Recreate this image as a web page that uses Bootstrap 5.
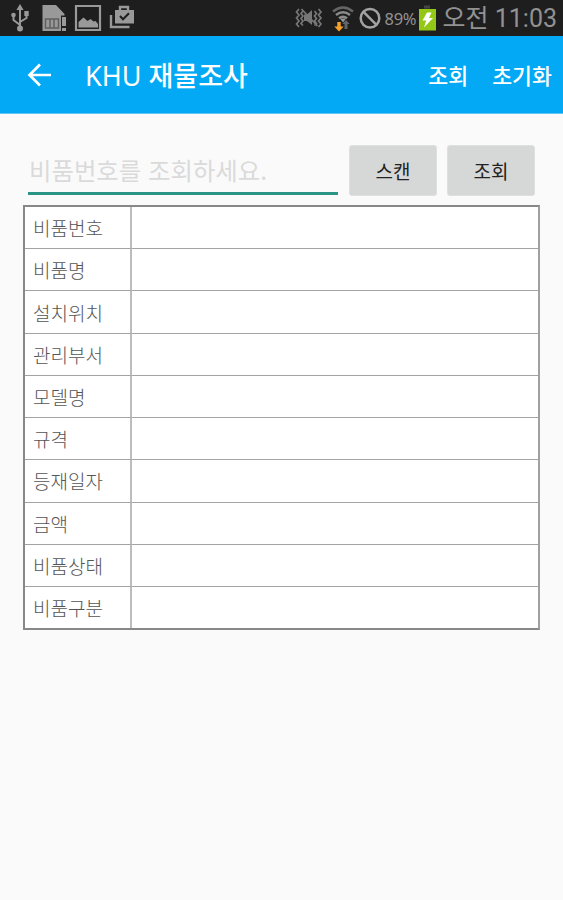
<!DOCTYPE html>
<html lang="ko">
<head>
<meta charset="utf-8">
<meta name="viewport" content="width=device-width, initial-scale=1">
<title>KHU 재물조사</title>
<link href="https://cdn.jsdelivr.net/npm/bootstrap@5.3.0/dist/css/bootstrap.min.css" rel="stylesheet">
<style>
body{background:#fafafa;font-family:Roboto,"Noto Sans CJK KR",sans-serif;min-height:900px;overflow:hidden}
.status-bar{height:36px;background:#1e1e1e;color:#929292;padding:0 6px 0 8px}
.status-bar svg{display:block;flex:none}
.battery-text{font-size:16.500px;line-height:36px;padding-top:1px;font-family:"Noto Sans",sans-serif;margin-left:3px;width:34px;letter-spacing:-.3px;white-space:nowrap}
.clock{font-size:25px;line-height:34px;padding-top:2px;margin-left:7px;white-space:nowrap}
.app-bar{height:78px;background:#03a9f4;color:#fff;padding:0 11px 0 26px;border-bottom:1px solid #62c6f5}
.app-title{font-size:27px;line-height:40px;padding-top:2px;font-weight:500;font-family:"Noto Sans","Noto Sans CJK KR",sans-serif;margin-left:33px;white-space:nowrap}
.app-title .latin{font-weight:400}
.app-action{font-size:21.7px;line-height:40px;font-weight:500;font-family:"Noto Sans CJK KR",sans-serif;color:#fff;white-space:nowrap}
.app-action:hover{color:#fff}
.search-row{padding:31px 28px 0 28px;height:91px}
.search-field{width:310px;height:50px;border:0;border-bottom:3px solid #2c9484;border-radius:0;background:transparent;padding:2px 1px 0;font-size:24.400px;font-family:"Noto Sans CJK KR",sans-serif;font-weight:400}
.search-field:focus{box-shadow:none;background:transparent;border-color:#2c9484}
.search-field::placeholder{color:#dadada;opacity:1}
.btn-tool{width:88px;height:51px;background:#d6d7d7;border:1px solid #dedfdf;border-radius:3px;font-size:19px;line-height:49px;font-family:"Noto Sans CJK KR",sans-serif;font-weight:400;color:#222;padding:0}
.tools{gap:10px}
.asset-table{width:517px;height:425px;margin:0 0 0 23px;background:#fff;border:2px solid #888;border-right-color:#a0a0a0;table-layout:fixed;border-collapse:separate;border-spacing:0}
.asset-table th,.asset-table td{border-bottom:1px solid #a3a3a3;padding:0;height:42.2px;vertical-align:middle}
.asset-table tr:last-child>*{border-bottom:0;height:41px}
.asset-table th{width:107px;padding-left:8px;padding-top:1px;border-right:2px solid #bdbdbd;font-weight:300;font-size:19px;line-height:28px;color:#555;font-family:"Noto Sans CJK KR",sans-serif}
</style>
<script src="https://cdn.jsdelivr.net/npm/bootstrap@5.3.0/dist/js/bootstrap.bundle.min.js"></script>
</head>
<body>
<div class="status-bar d-flex align-items-center">
  <svg width="130" height="36" viewBox="0 0 130 36" fill="#999">
    <!-- USB -->
    <path d="M12 4l3.600 6H8.400z"/><circle cx="12" cy="28.500" r="3"/>
    <path d="M12 8v20M12 25l-6.500-5v-5M12 22l6.500-4v-5" fill="none" stroke="#999" stroke-width="2"/>
    <circle cx="5.500" cy="15" r="2.300"/><path d="M16.300 11h4.400v5h-4.400z"/>
    <!-- SIM card -->
    <path d="M34.500 5H48l8.500 9v1.500H53V31H34.500z"/><path d="M54 17h4v9h-4zM54 28h4v3h-4z"/>
    <path d="M37.500 19h13v9h-13zM42 19v9M46 19v9" fill="none" stroke="#606060" stroke-width="1.500"/>
    <!-- Picture -->
    <path d="M68 6h24v24H68z" fill="none" stroke="#999" stroke-width="2.200"/>
    <path d="M70.500 27.500V22l5-4.500 4 3.500 3-2 3 2.500 2-.5 2.500 3v3.500z"/>
    <!-- Shopping bag -->
    <path d="M107 10h19v13.500h-19z"/><path d="M112 10V7h8v3M103 15v12h18.500" fill="none" stroke="#999" stroke-width="2.400"/>
    <path d="M112 16l3 3.200 6-6" fill="none" stroke="#1e1e1e" stroke-width="2"/>
  </svg>
  <svg class="ms-auto" width="87" height="36" viewBox="295 0 87 36">
    <!-- Vibrate with slash -->
    <g fill="none" stroke="#777" stroke-width="1.700">
      <path d="M299 9l-2.500 3 2.500 3-2.500 3 2.500 3-2.500 3 2.500 3M303 11l-2 2.500 2 2.500-2 2.500 2 2.500-2 2.500 2 2M318.500 9l2.500 3-2.500 3 2.500 3-2.500 3 2.500 3-2.500 3M314.500 11l2 2.500-2 2.500 2 2.500-2 2.500 2 2.500-2 2M301.500 9l16 17"/>
    </g>
    <path d="M304 14.500h3l5-4.500v15l-5-4h-3z" fill="#777"/>
    <!-- Wi-Fi with transfer arrows -->
    <g fill="none" stroke="#8c8c8c" stroke-width="2.500">
      <path d="M333 11.500q10-8 20 0" stroke="#666"/><path d="M336 15q7-5.500 14 0M339 18.300q4-3 8 0"/>
    </g>
    <path d="M340 18.500h6l-3 4z" fill="#999"/>
    <path d="M337.300 22h3.400v4.500h3L339 31.500l-4.700-5h3z" fill="#f5a22b"/>
    <path d="M344.500 29v-5h-2.200l3.700-4 3.700 4h-2.200v5z" fill="#60676a"/>
    <!-- Blocked -->
    <circle cx="370" cy="18.300" r="9.300" fill="none" stroke="#a2a2a2" stroke-width="2.500"/><path d="M363.500 11.800l13 13" stroke="#a2a2a2" stroke-width="2.500"/>
  </svg>
  <span class="battery-text">89%</span>
  <svg width="17" height="36" viewBox="0 0 17 36"><path d="M5 5.500h6v3H5z" fill="#444"/><path d="M0 9h17v21.500H0z" fill="#93c916"/><path d="M8 12.500h4.500L10 18h4L5 27.500 7.200 20.500H3.500z" fill="#fff"/></svg>
  <span class="clock">오전 11:03</span>
</div>
<nav class="app-bar d-flex align-items-center">
  <svg width="26" height="26" viewBox="0 0 26 26" fill="none" stroke="#fff" stroke-width="2.700"><path d="M25 13H4M14 2.500L3.500 13 14 23.500"/></svg>
  <span class="app-title"><span class="latin">KHU</span> 재물조사</span>
  <div class="d-flex ms-auto gap-4">
    <a class="app-action text-decoration-none" href="#">조회</a>
    <a class="app-action text-decoration-none" href="#">초기화</a>
  </div>
</nav>
<main>
  <div class="search-row d-flex align-items-start">
    <input class="form-control search-field" type="text" placeholder="비품번호를 조회하세요.">
    <div class="d-flex ms-auto tools">
      <button class="btn btn-tool" type="button">스캔</button>
      <button class="btn btn-tool" type="button">조회</button>
    </div>
  </div>
  <table class="asset-table">
    <tbody>
      <tr><th>비품번호</th><td></td></tr>
      <tr><th>비품명</th><td></td></tr>
      <tr><th>설치위치</th><td></td></tr>
      <tr><th>관리부서</th><td></td></tr>
      <tr><th>모델명</th><td></td></tr>
      <tr><th>규격</th><td></td></tr>
      <tr><th>등재일자</th><td></td></tr>
      <tr><th>금액</th><td></td></tr>
      <tr><th>비품상태</th><td></td></tr>
      <tr><th>비품구분</th><td></td></tr>
    </tbody>
  </table>
</main>
</body>
</html>
